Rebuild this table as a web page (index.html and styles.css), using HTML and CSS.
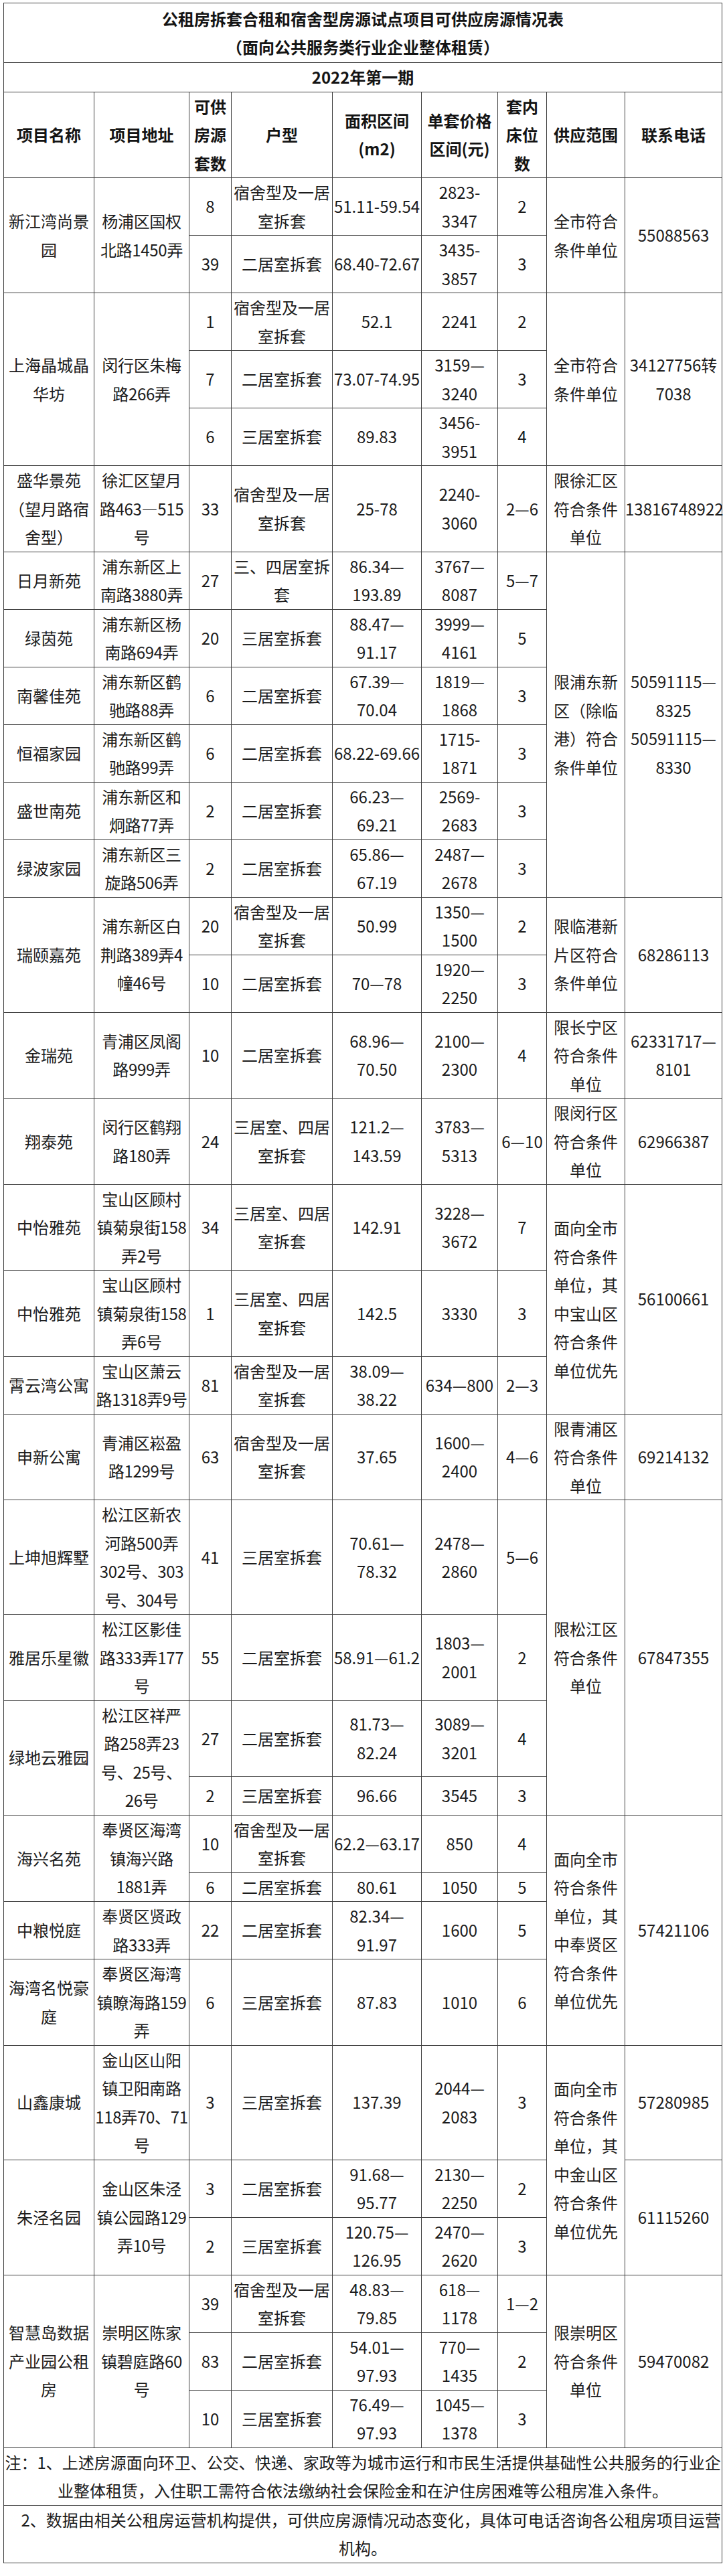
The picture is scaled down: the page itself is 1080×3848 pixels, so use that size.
FILE: index.html
```html
<!DOCTYPE html>
<html lang="zh-CN">
<head>
<meta charset="utf-8">
<title>公租房拆套合租和宿舍型房源试点项目可供应房源情况表</title>
<link rel="stylesheet" href="styles.css">
</head>
<body>
<div class="page">
<table class="sheet">
<colgroup>
<col class="c1"><col class="c2"><col class="c3"><col class="c4"><col class="c5"><col class="c6"><col class="c7"><col class="c8"><col class="c9">
</colgroup>
<tbody>
<tr><td colspan="9" class="title-cell">公租房拆套合租和宿舍型房源试点项目可供应房源情况表<br>（面向公共服务类行业企业整体租赁）</td></tr>
<tr><td colspan="9" class="period">2022年第一期</td></tr>
<tr class="head"><th>项目名称</th><th>项目地址</th><th>可供房源套数</th><th>户型</th><th>面积区间<br>(m2)</th><th>单套价格区间(元)</th><th>套内床位数</th><th>供应范围</th><th>联系电话</th></tr>

<tr><td rowspan="2">新江湾尚景园</td><td rowspan="2" class="addr">杨浦区国权北路1450弄</td><td>8</td><td>宿舍型及一居室拆套</td><td>51.11-59.54</td><td>2823-<br>3347</td><td>2</td><td rowspan="2">全市符合条件单位</td><td rowspan="2">55088563</td></tr>
<tr><td>39</td><td>二居室拆套</td><td>68.40-72.67</td><td>3435-<br>3857</td><td>3</td></tr>

<tr><td rowspan="3">上海晶城晶华坊</td><td rowspan="3" class="addr">闵行区朱梅路266弄</td><td>1</td><td>宿舍型及一居室拆套</td><td>52.1</td><td>2241</td><td>2</td><td rowspan="3">全市符合条件单位</td><td rowspan="3">34127756转<br>7038</td></tr>
<tr><td>7</td><td>二居室拆套</td><td>73.07-74.95</td><td>3159—<br>3240</td><td>3</td></tr>
<tr><td>6</td><td>三居室拆套</td><td>89.83</td><td>3456-<br>3951</td><td>4</td></tr>

<tr><td>盛华景苑（望月路宿舍型）</td><td class="addr">徐汇区望月路463—515号</td><td>33</td><td>宿舍型及一居室拆套</td><td>25-78</td><td>2240-<br>3060</td><td>2—6</td><td>限徐汇区符合条件单位</td><td>13816748922</td></tr>

<tr><td>日月新苑</td><td class="addr">浦东新区上南路3880弄</td><td>27</td><td>三、四居室拆套</td><td>86.34—<br>193.89</td><td>3767—<br>8087</td><td>5—7</td><td rowspan="6">限浦东新区（除临港）符合条件单位</td><td rowspan="6">50591115—<br>8325<br>50591115—<br>8330</td></tr>
<tr><td>绿茵苑</td><td class="addr">浦东新区杨南路694弄</td><td>20</td><td>三居室拆套</td><td>88.47—<br>91.17</td><td>3999—<br>4161</td><td>5</td></tr>
<tr><td>南馨佳苑</td><td class="addr">浦东新区鹤驰路88弄</td><td>6</td><td>二居室拆套</td><td>67.39—<br>70.04</td><td>1819—<br>1868</td><td>3</td></tr>
<tr><td>恒福家园</td><td class="addr">浦东新区鹤驰路99弄</td><td>6</td><td>二居室拆套</td><td>68.22-69.66</td><td>1715-<br>1871</td><td>3</td></tr>
<tr><td>盛世南苑</td><td class="addr">浦东新区和炯路77弄</td><td>2</td><td>二居室拆套</td><td>66.23—<br>69.21</td><td>2569-<br>2683</td><td>3</td></tr>
<tr><td>绿波家园</td><td class="addr">浦东新区三旋路506弄</td><td>2</td><td>二居室拆套</td><td>65.86—<br>67.19</td><td>2487—<br>2678</td><td>3</td></tr>

<tr><td rowspan="2">瑞颐嘉苑</td><td rowspan="2" class="addr">浦东新区白荆路389弄4幢46号</td><td>20</td><td>宿舍型及一居室拆套</td><td>50.99</td><td>1350—<br>1500</td><td>2</td><td rowspan="2">限临港新片区符合条件单位</td><td rowspan="2">68286113</td></tr>
<tr><td>10</td><td>二居室拆套</td><td>70—78</td><td>1920—<br>2250</td><td>3</td></tr>

<tr><td>金瑞苑</td><td class="addr">青浦区凤阁路999弄</td><td>10</td><td>二居室拆套</td><td>68.96—<br>70.50</td><td>2100—<br>2300</td><td>4</td><td>限长宁区符合条件单位</td><td>62331717—<br>8101</td></tr>

<tr><td>翔泰苑</td><td class="addr">闵行区鹤翔路180弄</td><td>24</td><td>三居室、四居室拆套</td><td>121.2—<br>143.59</td><td>3783—<br>5313</td><td>6—10</td><td>限闵行区符合条件单位</td><td>62966387</td></tr>

<tr><td>中怡雅苑</td><td class="addr">宝山区顾村镇菊泉街158弄2号</td><td>34</td><td>三居室、四居室拆套</td><td>142.91</td><td>3228—<br>3672</td><td>7</td><td rowspan="3">面向全市符合条件单位，其中宝山区符合条件单位优先</td><td rowspan="3">56100661</td></tr>
<tr><td>中怡雅苑</td><td class="addr">宝山区顾村镇菊泉街158弄6号</td><td>1</td><td>三居室、四居室拆套</td><td>142.5</td><td>3330</td><td>3</td></tr>
<tr><td>霄云湾公寓</td><td class="addr">宝山区萧云路1318弄9号</td><td>81</td><td>宿舍型及一居室拆套</td><td>38.09—<br>38.22</td><td>634—800</td><td>2—3</td></tr>

<tr><td>申新公寓</td><td class="addr">青浦区崧盈路1299号</td><td>63</td><td>宿舍型及一居室拆套</td><td>37.65</td><td>1600—<br>2400</td><td>4—6</td><td>限青浦区符合条件单位</td><td>69214132</td></tr>

<tr><td>上坤旭辉墅</td><td class="addr">松江区新农河路500弄302号、303号、304号</td><td>41</td><td>三居室拆套</td><td>70.61—<br>78.32</td><td>2478—<br>2860</td><td>5—6</td><td rowspan="4">限松江区符合条件单位</td><td rowspan="4">67847355</td></tr>
<tr><td>雅居乐星徽</td><td class="addr">松江区影佳路333弄177号</td><td>55</td><td>二居室拆套</td><td>58.91—61.2</td><td>1803—<br>2001</td><td>2</td></tr>
<tr><td rowspan="2">绿地云雅园</td><td rowspan="2" class="addr">松江区祥严路258弄23号、25号、26号</td><td>27</td><td>二居室拆套</td><td>81.73—<br>82.24</td><td>3089—<br>3201</td><td>4</td></tr>
<tr><td>2</td><td>三居室拆套</td><td>96.66</td><td>3545</td><td>3</td></tr>

<tr><td rowspan="2">海兴名苑</td><td rowspan="2" class="addr">奉贤区海湾镇海兴路1881弄</td><td>10</td><td>宿舍型及一居室拆套</td><td>62.2—63.17</td><td>850</td><td>4</td><td rowspan="4">面向全市符合条件单位，其中奉贤区符合条件单位优先</td><td rowspan="4">57421106</td></tr>
<tr><td>6</td><td>二居室拆套</td><td>80.61</td><td>1050</td><td>5</td></tr>
<tr><td>中粮悦庭</td><td class="addr">奉贤区贤政路333弄</td><td>22</td><td>二居室拆套</td><td>82.34—<br>91.97</td><td>1600</td><td>5</td></tr>
<tr><td>海湾名悦豪庭</td><td class="addr">奉贤区海湾镇瞭海路159弄</td><td>6</td><td>三居室拆套</td><td>87.83</td><td>1010</td><td>6</td></tr>

<tr><td>山鑫康城</td><td class="addr">金山区山阳镇卫阳南路118弄70、71号</td><td>3</td><td>三居室拆套</td><td>137.39</td><td>2044—<br>2083</td><td>3</td><td rowspan="3">面向全市符合条件单位，其中金山区符合条件单位优先</td><td>57280985</td></tr>
<tr><td rowspan="2">朱泾名园</td><td rowspan="2" class="addr">金山区朱泾镇公园路129弄10号</td><td>3</td><td>二居室拆套</td><td>91.68—<br>95.77</td><td>2130—<br>2250</td><td>2</td><td rowspan="2">61115260</td></tr>
<tr><td>2</td><td>三居室拆套</td><td>120.75—<br>126.95</td><td>2470—<br>2620</td><td>3</td></tr>

<tr><td rowspan="3">智慧岛数据产业园公租房</td><td rowspan="3" class="addr">崇明区陈家镇碧庭路60号</td><td>39</td><td>宿舍型及一居室拆套</td><td>48.83—<br>79.85</td><td>618—<br>1178</td><td>1—2</td><td rowspan="3">限崇明区符合条件单位</td><td rowspan="3">59470082</td></tr>
<tr><td>83</td><td>二居室拆套</td><td>54.01—<br>97.93</td><td>770—<br>1435</td><td>2</td></tr>
<tr><td>10</td><td>三居室拆套</td><td>76.49—<br>97.93</td><td>1045—<br>1378</td><td>3</td></tr>

<tr><td colspan="9" class="note">注：1、上述房源面向环卫、公交、快递、家政等为城市运行和市民生活提供基础性公共服务的行业企业整体租赁，入住职工需符合依法缴纳社会保险金和在沪住房困难等公租房准入条件。</td></tr>
<tr><td colspan="9" class="note">　2、数据由相关公租房运营机构提供，可供应房源情况动态变化，具体可电话咨询各公租房项目运营机构。</td></tr>
</tbody>
</table>
</div>
</body>
</html>
```
FILE: styles.css
```css
html, body {
  margin: 0;
  padding: 0;
  background: #ffffff;
}

body {
  font-family: "Noto Sans CJK SC", "Noto Sans", sans-serif;
  color: #1c1c1c;
}

.page {
  padding: 4px 2px 8px 5px;
}

.sheet {
  border-collapse: collapse;
  table-layout: fixed;
  width: 1073px;
}

.c1 { width: 135px; }
.c2 { width: 142px; }
.c3 { width: 63px; }
.c4 { width: 151px; }
.c5 { width: 133px; }
.c6 { width: 114px; }
.c7 { width: 73px; }
.c8 { width: 117px; }
.c9 { width: 145px; }

.sheet td,
.sheet th {
  border: 1px solid #3e3e3e;
  padding: 0;
  font-size: 24px;
  line-height: 42.5px;
  font-weight: 400;
  text-align: center;
  vertical-align: middle;
}

.sheet th {
  font-weight: 700;
  padding: 0 3px;
  color: #141414;
}

.sheet .addr {
  letter-spacing: -0.3px;
}

.sheet .title-cell {
  font-weight: 700;
  padding: 1.5px 0;
  color: #141414;
}

.sheet .period {
  font-weight: 700;
  color: #141414;
}

.sheet .note {
  padding: 0;
}
```
